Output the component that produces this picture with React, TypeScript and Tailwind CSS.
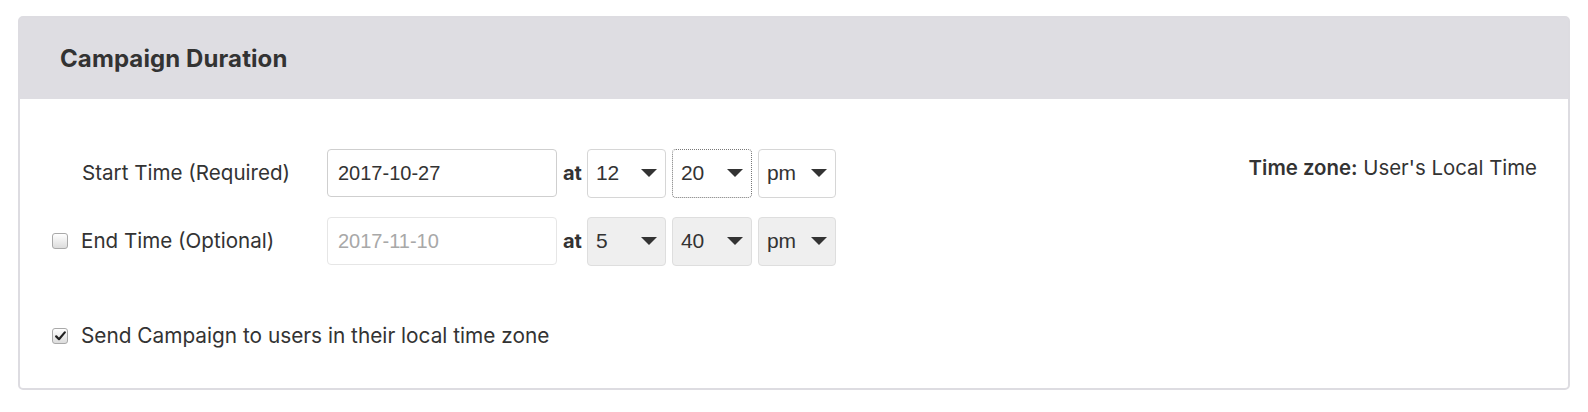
import React, { useState } from "react";

const Caret = () => (
  <svg width="16" height="8" viewBox="0 0 16 8" className="shrink-0">
    <path d="M0 0 H16 L8 8 Z" fill="#333" />
  </svg>
);

interface SelectBoxProps {
  value: string;
  width: string;
  disabled?: boolean;
  focused?: boolean;
}

const SelectBox: React.FC<SelectBoxProps> = ({ value, width, disabled, focused }) => {
  const base =
    "h-[49px] flex items-center justify-between pl-[8px] pr-[8px] rounded-[4px] text-[21px] text-[#333] font-['Liberation_Sans',Arial,sans-serif]";
  const look = focused
    ? "border border-dotted border-[#777] bg-white"
    : disabled
    ? "border border-[#dedede] bg-[#efefef]"
    : "border border-[#d6d6d6] bg-white";
  return (
    <div className={`${base} ${look} ${width}`}>
      <span>{value}</span>
      <Caret />
    </div>
  );
};

const CheckBox: React.FC<{ checked: boolean; onToggle: () => void }> = ({ checked, onToggle }) => (
  <button
    type="button"
    onClick={onToggle}
    className="w-[16px] h-[16px] rounded-[3px] border border-[#a9a9a9] bg-gradient-to-b from-white to-[#dcdcdc] flex items-center justify-center shrink-0 p-0"
  >
    {checked && (
      <svg width="11" height="10" viewBox="0 0 11 10">
        <path d="M1.2 5.4 L4 8.2 L9.8 1.4" stroke="#222" strokeWidth="2.2" fill="none" strokeLinecap="round" strokeLinejoin="round" />
      </svg>
    )}
  </button>
);

export default function App() {
  const [endEnabled, setEndEnabled] = useState(false);
  const [localTz, setLocalTz] = useState(true);

  return (
    <div className="w-[1588px] h-[412px] bg-white pt-[16px] px-[18px] font-['Inter',sans-serif] text-[#333]">
      <div className="border-2 border-[#dddce1] rounded-[5px] h-[374px] flex flex-col">
        {/* Header */}
        <div className="h-[81px] bg-[#dedde2] flex items-center pl-[40px]">
          <h2 className="text-[24px] font-bold text-[#333] tracking-[0.1px]">Campaign Duration</h2>
        </div>

        {/* Body */}
        <div className="flex-1 pt-[50px] pl-[32px] pr-[31px] flex justify-between">
          <div className="flex flex-col">
            {/* Start row */}
            <div className="flex items-center h-[48px]">
              <div className="w-[275px] pl-[30px] text-[20.6px]">Start Time (Required)</div>
              <div className="w-[230px] h-[48px] border border-[#cfcfcf] rounded-[4px] flex items-center pl-[10px] text-[20px] text-[#333] font-['Liberation_Sans',Arial,sans-serif]">
                2017-10-27
              </div>
              <span className="ml-[6px] mr-[5px] text-[20px] font-bold">at</span>
              <div className="flex gap-[6px]">
                <SelectBox value="12" width="w-[79px]" />
                <SelectBox value="20" width="w-[80px]" focused />
                <SelectBox value="pm" width="w-[78px]" />
              </div>
            </div>

            {/* End row */}
            <div className="flex items-center h-[48px] mt-[20px]">
              <div className="w-[275px] flex items-center gap-[13px] text-[20.6px]">
                <CheckBox checked={endEnabled} onToggle={() => setEndEnabled(!endEnabled)} />
                <span>End Time (Optional)</span>
              </div>
              <div className="w-[230px] h-[48px] border border-[#e6e6e6] rounded-[4px] flex items-center pl-[10px] text-[20px] text-[#a8a8a8] font-['Liberation_Sans',Arial,sans-serif]">
                2017-11-10
              </div>
              <span className="ml-[6px] mr-[5px] text-[20px] font-bold">at</span>
              <div className="flex gap-[6px]">
                <SelectBox value="5" width="w-[79px]" disabled />
                <SelectBox value="40" width="w-[80px]" disabled />
                <SelectBox value="pm" width="w-[78px]" disabled />
              </div>
            </div>

            {/* Local time zone */}
            <div className="flex items-center gap-[13px] mt-[55px] text-[20.8px]">
              <CheckBox checked={localTz} onToggle={() => setLocalTz(!localTz)} />
              <span>Send Campaign to users in their local time zone</span>
            </div>
          </div>

          <div className="pt-[4px] text-[20.4px]">
            <span className="font-semibold">Time zone:</span> User's Local Time
          </div>
        </div>
      </div>
    </div>
  );
}
